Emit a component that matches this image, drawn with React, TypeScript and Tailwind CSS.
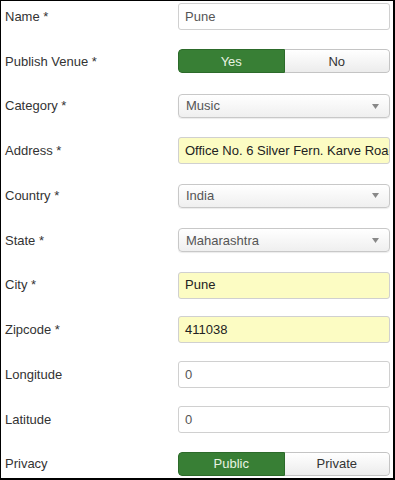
import React from 'react'

type Row =
  | { label: string; kind: 'input'; value: string; filled?: boolean }
  | { label: string; kind: 'select'; value: string }
  | { label: string; kind: 'toggle'; on: string; off: string }

const rows: Row[] = [
  { label: 'Name *', kind: 'input', value: 'Pune' },
  { label: 'Publish Venue *', kind: 'toggle', on: 'Yes', off: 'No' },
  { label: 'Category *', kind: 'select', value: 'Music' },
  { label: 'Address *', kind: 'input', value: 'Office No. 6 Silver Fern. Karve Road', filled: true },
  { label: 'Country *', kind: 'select', value: 'India' },
  { label: 'State *', kind: 'select', value: 'Maharashtra' },
  { label: 'City *', kind: 'input', value: 'Pune', filled: true },
  { label: 'Zipcode *', kind: 'input', value: '411038', filled: true },
  { label: 'Longitude', kind: 'input', value: '0' },
  { label: 'Latitude', kind: 'input', value: '0' },
  { label: 'Privacy', kind: 'toggle', on: 'Public', off: 'Private' },
]

function Field({ row }: { row: Row }) {
  if (row.kind === 'toggle') {
    return (
      <div className="flex h-[24px] w-[212px] overflow-hidden rounded-[4px] text-[13px]">
        <div className="flex flex-1 items-center justify-center border border-[#2c6a2a] bg-[#387f35] text-[#e8f3e2] rounded-l-[4px]">
          {row.on}
        </div>
        <div className="flex flex-1 items-center justify-center border border-l-0 border-[#c4c4c4] bg-gradient-to-b from-white to-[#ececec] text-[#333] rounded-r-[4px]">
          {row.off}
        </div>
      </div>
    )
  }
  if (row.kind === 'select') {
    return (
      <div className="flex h-[24px] w-[212px] items-center justify-between rounded-[4px] border border-[#c8c8c8] bg-gradient-to-b from-white to-[#efefef] pl-[7px] pr-[10px] text-[13px] text-[#555] shadow-[0_1px_1px_rgba(0,0,0,0.08)]">
        <span>{row.value}</span>
        <svg width="7" height="5" viewBox="0 0 7 5">
          <path d="M0 0 H7 L3.5 5 Z" fill="#888" />
        </svg>
      </div>
    )
  }
  return (
    <div
      className={
        'flex h-[27px] w-[212px] items-center overflow-hidden whitespace-nowrap rounded-[3px] border border-[#d0d0d0] pl-[6px] text-[13px] ' +
        (row.filled ? 'bg-[#fcfcc3] text-[#222]' : 'bg-white text-[#555]')
      }
    >
      {row.value}
    </div>
  )
}

export default function App() {
  return (
    <div className="h-[480px] w-[395px] overflow-hidden border-l border-t border-r-2 border-b-2 border-black bg-white font-['Liberation_Sans',Arial,sans-serif]">
      <div className="flex flex-col gap-[17.75px] pt-[2px]">
        {rows.map((row) => (
          <div key={row.label} className="flex h-[27px] items-center">
            <div className="w-[177px] pl-[4px] text-[13px] text-[#333]">{row.label}</div>
            <Field row={row} />
          </div>
        ))}
      </div>
    </div>
  )
}
